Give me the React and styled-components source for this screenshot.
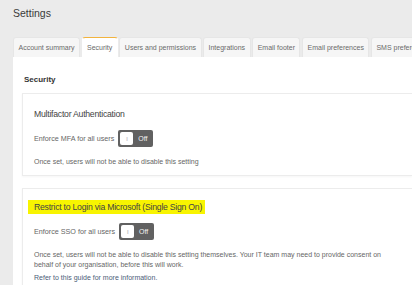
import React from 'react';
import styled, { createGlobalStyle } from 'styled-components';

const GlobalStyle = createGlobalStyle`
  html, body {
    margin: 0;
    padding: 0;
    background: #ebebeb;
    font-family: "Liberation Sans", Arial, sans-serif;
  }
`;

const tabs = [
  'Account summary',
  'Security',
  'Users and permissions',
  'Integrations',
  'Email footer',
  'Email preferences',
  'SMS preferences',
];

const Toggle = ({ label }) => (
  <ToggleRow>
    <ToggleLabel>{label}</ToggleLabel>
    <Switch>
      <Knob>||</Knob>
      <SwitchText>Off</SwitchText>
    </Switch>
  </ToggleRow>
);

const App = () => {
  return (
    <>
      <GlobalStyle />
      <Page>
        <Title>Settings</Title>
        <Tabs>
          {tabs.map((t) => (
            <Tab key={t} active={t === 'Security'}>
              {t}
            </Tab>
          ))}
        </Tabs>
        <Panel>
          <Heading>Security</Heading>
          <Card top={14}>
            <CardTitle>Multifactor Authentication</CardTitle>
            <Toggle label="Enforce MFA for all users" />
            <Note>Once set, users will not be able to disable this setting</Note>
          </Card>
          <Card top={12}>
            <CardTitle>
              <Highlight>Restrict to Login via Microsoft (Single Sign On)</Highlight>
            </CardTitle>
            <Toggle label="Enforce SSO for all users" />
            <Note>
              Once set, users will not be able to disable this setting themselves. Your IT team may need to provide consent on
              <br />
              behalf of your organisation, before this will work.
            </Note>
            <GuideLink>Refer to this guide for more information.</GuideLink>
          </Card>
        </Panel>
      </Page>
    </>
  );
};

export default App;

const Page = styled.div`
  width: 412px;
  height: 285px;
  overflow: hidden;
  padding-left: 13px;
  box-sizing: border-box;
`;

const Title = styled.div`
  padding: 7px 0 0 0;
  height: 29px;
  box-sizing: border-box;
  font-size: 10.5px;
  color: #3a3a3a;
`;

const Tabs = styled.div`
  display: flex;
  gap: 1.5px;
  margin-top: 8px;
  white-space: nowrap;
`;

const Tab = styled.div`
  flex: none;
  height: 20px;
  box-sizing: border-box;
  padding: 0 4.5px;
  display: flex;
  align-items: center;
  font-size: 7px;
  color: #6a6a6a;
  background: ${(p) => (p.active ? '#ffffff' : '#f6f6f6')};
  border: 1px solid ${(p) => (p.active ? '#ffffff' : '#e6e6e6')};
  border-bottom: none;
  border-top: 1.5px solid ${(p) => (p.active ? '#f2b33d' : '#e6e6e6')};
  border-radius: 3px 3px 0 0;
`;

const Panel = styled.div`
  background: #ffffff;
  padding: 18px 0 0 9px;
  height: 240px;
`;

const Heading = styled.div`
  font-size: 8px;
  line-height: 9px;
  font-weight: bold;
  color: #333;
  padding-left: 2px;
  margin-bottom: 9px;
`;

const Card = styled.div`
  border: 1px solid #ececec;
  border-right: none;
  box-shadow: 0 1px 2px rgba(0, 0, 0, 0.04);
  padding: ${(p) => p.top}px 0 8px 11px;
  margin-bottom: 12px;
`;

const CardTitle = styled.div`
  font-size: 8.7px;
  letter-spacing: -0.25px;
  line-height: 12px;
  color: #444;
  margin-bottom: 10px;
`;

const Highlight = styled.span`
  background: #f8f400;
  padding: 2px 3px 2px 6px;
  margin-left: -6px;
`;

const ToggleRow = styled.div`
  display: flex;
  align-items: center;
  gap: 4px;
  margin-bottom: 10px;
`;

const ToggleLabel = styled.span`
  font-size: 7.2px;
  color: #666;
`;

const Switch = styled.div`
  width: 35px;
  height: 17px;
  box-sizing: border-box;
  background: #616161;
  border-radius: 2px;
  padding: 2px;
  display: flex;
  align-items: center;
  gap: 5px;
`;

const Knob = styled.div`
  width: 13px;
  height: 13px;
  background: #fff;
  border-radius: 2px;
  font-size: 4px;
  color: #aaa;
  display: flex;
  align-items: center;
  justify-content: center;
  letter-spacing: -0.5px;
`;

const SwitchText = styled.span`
  font-size: 7px;
  color: #f2f2f2;
`;

const Note = styled.div`
  font-size: 7px;
  line-height: 10px;
  color: #666;
`;

const GuideLink = styled.div`
  font-size: 7px;
  line-height: 10px;
  color: #4a5d78;
  margin-top: 3px;
`;
